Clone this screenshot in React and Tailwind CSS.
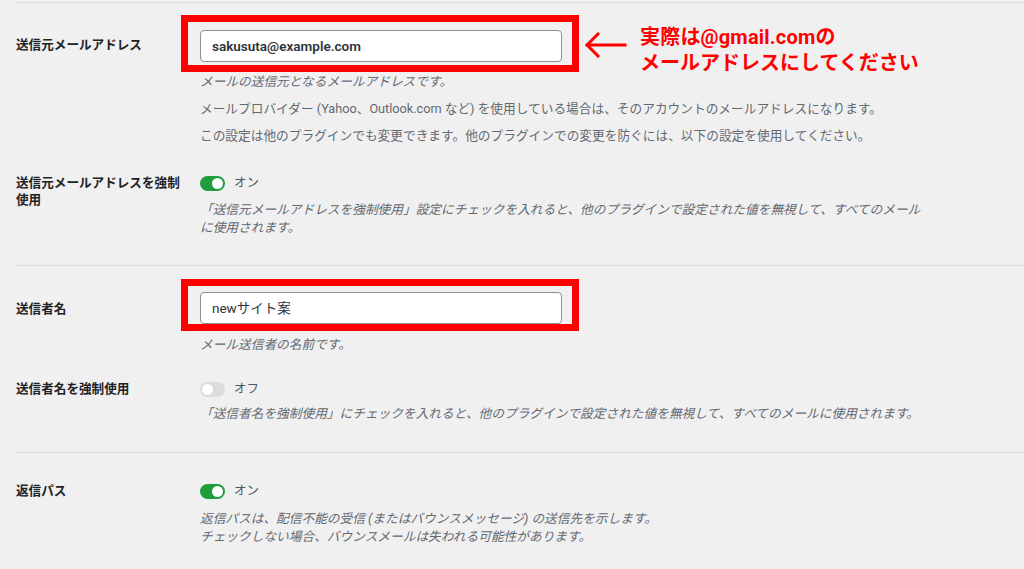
import React from "react";

const font = "font-['Roboto','Noto_Sans_CJK_JP',sans-serif]";

// WP Mail SMTP 風のトグル
function Toggle({ on, label }) {
  return (
    <div className="flex h-[18px] items-center gap-[9px]">
      <span
        className={
          on
            ? "flex h-[15px] w-[25px] items-center justify-end rounded-full bg-[#1e9e3c] px-[2px]"
            : "flex h-[15px] w-[25px] items-center justify-start rounded-full bg-[#dcdcde] px-[2px]"
        }
      >
        <span className="h-[11px] w-[11px] rounded-full bg-white" />
      </span>
      <span className="text-[12.5px] leading-none text-[#50575e]">{label}</span>
    </div>
  );
}

function TextField({ value, strong, frame }) {
  return (
    <div className="relative w-[362px] shrink-0">
      <div
        className={`flex h-[32px] items-center rounded-[4px] border border-[#8c8f94] bg-white px-[11px] text-[13.5px] text-[#2c3338] ${
          strong ? "font-semibold" : "font-normal"
        }`}
      >
        {value}
      </div>
      {/* 赤枠の注釈 */}
      <div className={`pointer-events-none absolute border-[7px] border-[#ff0000] ${frame}`} />
    </div>
  );
}

function Desc({ children, italic, className = "" }) {
  return (
    <p
      className={`text-[12.7px] leading-[18px] text-[#646970] ${italic ? "italic" : ""} ${className}`}
    >
      {children}
    </p>
  );
}

function Label({ children, className = "" }) {
  return (
    <div className={`w-[185px] shrink-0 pl-px text-[12.6px] font-bold text-[#1d2327] ${className}`}>
      {children}
    </div>
  );
}

export default function App() {
  return (
    <div className={`h-[569px] w-[1024px] overflow-hidden bg-[#f0f0f1] pl-[15px] pt-[2px] ${font}`}>
      {/* 送信元 */}
      <section className="border-t border-[#dcdcde] pt-[27px] pb-[28px]">
        <div className="flex">
          <Label className="pt-[6px] leading-[18px]">送信元メールアドレス</Label>
          <div>
            <div className="flex h-[32px] items-start">
              <TextField
                value="sakusuta@example.com"
                strong
                frame="-left-[19px] -top-[15px] -right-[17px] -bottom-[10px]"
              />
              <svg
                width="42"
                height="26"
                viewBox="0 0 42 26"
                className="ml-[23px] mt-[2px] shrink-0"
                fill="none"
                stroke="#ff0000"
                strokeWidth="3"
                strokeLinecap="square"
              >
                <path d="M2 13H40" />
                <path d="M13 2L2 13L13 24" />
              </svg>
              <div className="-mt-[6px] ml-[13px] shrink-0 text-[20px] font-bold leading-[26px] text-[#ff0000]">
                <div className="tracking-[0.2px]">実際は@gmail.comの</div>
                <div>メールアドレスにしてください</div>
              </div>
            </div>
            <Desc italic className="mt-[11px]">
              メールの送信元となるメールアドレスです。
            </Desc>
            <Desc className="mt-[9px]">
              メールプロバイダー (Yahoo、Outlook.com など) を使用している場合は、そのアカウントのメールアドレスになります。
            </Desc>
            <Desc className="mt-[9px]">
              この設定は他のプラグインでも変更できます。他のプラグインでの変更を防ぐには、以下の設定を使用してください。
            </Desc>
          </div>
        </div>

        <div className="mt-[29px] flex">
          <Label className="leading-[17px]">
            送信元メールアドレスを強制
            <br />
            使用
          </Label>
          <div>
            <Toggle on label="オン" />
            <Desc italic className="mt-[9px] leading-[18.5px]">
              「送信元メールアドレスを強制使用」設定にチェックを入れると、他のプラグインで設定された値を無視して、すべてのメール
              <br />
              に使用されます。
            </Desc>
          </div>
        </div>
      </section>

      {/* 送信者名 */}
      <section className="border-t border-[#dcdcde] pt-[26px] pb-[29px]">
        <div className="flex">
          <Label className="pt-[8px] leading-[18px]">送信者名</Label>
          <div>
            <TextField value="newサイト案" frame="-left-[19px] -top-[13px] -right-[17px] -bottom-[7px]" />
            <Desc italic className="mt-[12px]">
              メール送信者の名前です。
            </Desc>
          </div>
        </div>

        <div className="mt-[26px] flex">
          <Label className="leading-[18px]">送信者名を強制使用</Label>
          <div>
            <Toggle label="オフ" />
            <Desc italic className="mt-[7px]">
              「送信者名を強制使用」にチェックを入れると、他のプラグインで設定された値を無視して、すべてのメールに使用されます。
            </Desc>
          </div>
        </div>
      </section>

      {/* 返信パス */}
      <section className="border-t border-[#dcdcde] pt-[29px]">
        <div className="flex">
          <Label className="leading-[18px]">返信パス</Label>
          <div>
            <Toggle on label="オン" />
            <Desc italic className="mt-[10px]">
              返信パスは、配信不能の受信 (またはバウンスメッセージ) の送信先を示します。
              <br />
              チェックしない場合、バウンスメールは失われる可能性があります。
            </Desc>
          </div>
        </div>
      </section>
    </div>
  );
}
